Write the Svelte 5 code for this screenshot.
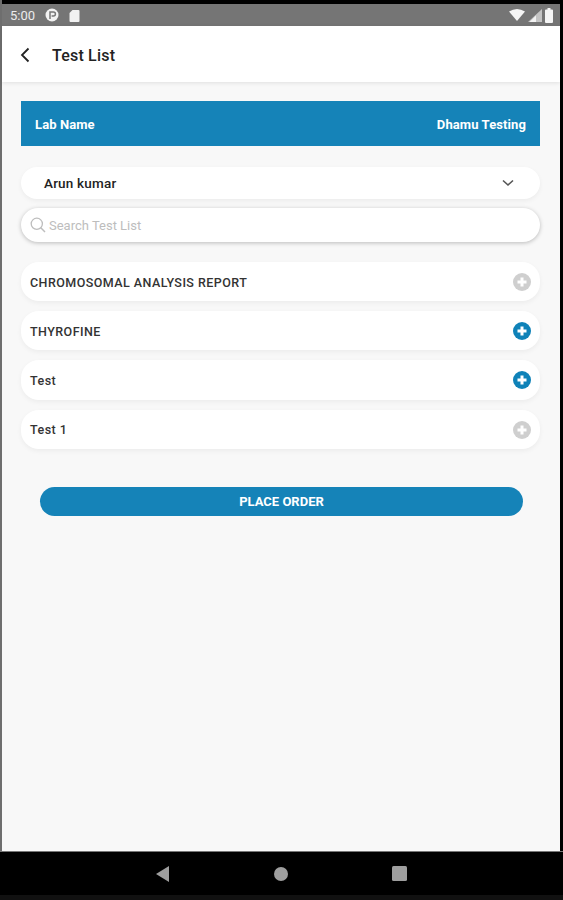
<script>
  let tests = [
    { name: "CHROMOSOMAL ANALYSIS REPORT", active: false },
    { name: "THYROFINE", active: true },
    { name: "Test", active: true },
    { name: "Test 1", active: false },
  ];
</script>

<div class="device">
  <div class="status">
    <div class="status-left">
      <span class="time">5:00</span>
      <svg width="14" height="14" viewBox="0 0 14 14"><circle cx="7" cy="7" r="6.5" fill="#f2f2f2" /><path d="M5 11V4h3.4a2 2 0 0 1 0 4H6.6" fill="none" stroke="#777" stroke-width="1.5" /></svg>
      <svg width="11" height="13" viewBox="0 0 11 13"><path d="M3.5 1H9.5a1 1 0 0 1 1 1v10a1 1 0 0 1-1 1H1.500a1 1 0 0 1-1-1V4z" fill="#f2f2f2" /></svg>
    </div>
    <div class="status-right">
      <svg width="16" height="12" viewBox="0 0 16 12"><path d="M0 2.500Q8-2.500 16 2.500L8 12z" fill="#f5f5f5" /></svg>
      <svg width="14" height="13" viewBox="0 0 14 13"><path d="M14 0V13H0z" fill="#c4c4c4" /><path d="M8 6.500V13H1.500z" fill="#f2f2f2" /></svg>
      <svg width="8" height="15" viewBox="0 0 8 15"><path d="M2.500 0h3v1.500H7a1 1 0 0 1 1 1V14a1 1 0 0 1-1 1H1a1 1 0 0 1-1-1V2.500a1 1 0 0 1 1-1h1.500z" fill="#f5f5f5" /></svg>
    </div>
  </div>

  <header>
    <svg class="back" width="10" height="16" viewBox="0 0 10 16"><path d="M8.500 1.500 2 8l6.500 6.500" fill="none" stroke="#222" stroke-width="1.800" /></svg>
    <h1>Test List</h1>
  </header>

  <main>
    <div class="lab">
      <span>Lab Name</span>
      <span>Dhamu Testing</span>
    </div>

    <div class="select">
      <span>Arun kumar</span>
      <svg width="12" height="8" viewBox="0 0 12 8"><path d="M1 1.500 6 6l5-4.500" fill="none" stroke="#555" stroke-width="1.600" /></svg>
    </div>

    <div class="search">
      <svg width="16" height="16" viewBox="0 0 16 16"><circle cx="6.800" cy="6.800" r="5.600" fill="none" stroke="#bdbdbd" stroke-width="1.300" /><path d="m10.800 10.800 4.200 4.200" stroke="#bdbdbd" stroke-width="1.500" /></svg>
      <span>Search Test List</span>
    </div>

    <ul>
      {#each tests as test}
        <li>
          <span>{test.name}</span>
          <svg width="18" height="18" viewBox="0 0 18 18">
            <circle cx="9" cy="9" r="9" fill={test.active ? "#0f82b8" : "#cfcfcf"} />
            <path d="M9 4.500v9M4.500 9h9" stroke="#fff" stroke-width="3" />
          </svg>
        </li>
      {/each}
    </ul>

    <button>PLACE ORDER</button>
  </main>

  <nav>
    <svg class="tri" width="13" height="16" viewBox="0 0 13 16"><path d="M13 0V16L0 8z" fill="#9e9e9e" /></svg>
    <svg width="14" height="14" viewBox="0 0 14 14"><circle cx="7" cy="7" r="7" fill="#9e9e9e" /></svg>
    <svg width="15" height="15" viewBox="0 0 15 15"><rect width="15" height="15" rx="1.500" fill="#9e9e9e" /></svg>
  </nav>
</div>

<style>
  :global(body) {
    margin: 0;
    background: #000;
  }

  .device {
    width: 563px;
    height: 900px;
    box-sizing: border-box;
    padding: 4px 3px 0 2px;
    background: linear-gradient(90deg, #6e6e6e 2px, #000 2px);
    display: flex;
    flex-direction: column;
    font-family: Roboto, sans-serif;
    overflow: hidden;
  }

  .status {
    height: 22px;
    flex: none;
    background: #757575;
    display: flex;
    align-items: center;
    justify-content: space-between;
    padding: 0 8px;
    color: #ececec;
  }

  .status-left,
  .status-right {
    display: flex;
    align-items: center;
  }

  .status-left {
    gap: 10px;
  }

  .status-right {
    gap: 3px;
    margin-right: -1px;
  }

  .time {
    font-size: 13px;
  }

  header {
    height: 56px;
    flex: none;
    box-sizing: border-box;
    padding: 2px 0 0 18px;
    background: #fff;
    display: flex;
    align-items: center;
    gap: 22px;
    box-shadow: 0 1px 4px rgba(0, 0, 0, 0.1);
    position: relative;
  }

  h1 {
    margin: 0;
    font-size: 16px;
    font-weight: 500;
    color: #222;
    letter-spacing: 0.2px;
  }

  main {
    flex: 1;
    background: #f8f8f8;
    padding: 19px 20px 0 19px;
    display: flex;
    flex-direction: column;
  }

  .lab {
    height: 45px;
    box-sizing: border-box;
    padding: 2px 14px 0;
    background: #1583b8;
    color: #fff;
    font-size: 13px;
    font-weight: 700;
    letter-spacing: 0.1px;
    display: flex;
    align-items: center;
    justify-content: space-between;
  }

  .select {
    height: 32px;
    margin-top: 21px;
    background: #fff;
    border-radius: 16px;
    box-shadow: 0 2px 5px rgba(0, 0, 0, 0.05);
    display: flex;
    align-items: center;
    justify-content: space-between;
    padding: 0 26px 0 23px;
    font-size: 13.5px;
    font-weight: 500;
    letter-spacing: 0.2px;
    color: #222;
  }

  .search {
    height: 34px;
    margin-top: 9px;
    background: #fff;
    border-radius: 17px;
    box-shadow: 0 1px 4px rgba(0, 0, 0, 0.25);
    display: flex;
    align-items: center;
    gap: 3px;
    padding-left: 9px;
    font-size: 13px;
    color: #bdbdbd;
  }

  ul {
    list-style: none;
    margin: 20px 0 0;
    padding: 0;
    display: flex;
    flex-direction: column;
    gap: 10px;
  }

  li {
    height: 39.2px;
    box-sizing: border-box;
    background: #fff;
    border-radius: 18px;
    box-shadow: 0 2px 5px rgba(0, 0, 0, 0.05);
    display: flex;
    align-items: center;
    justify-content: space-between;
    padding: 1px 9px 0;
    font-size: 12.5px;
    font-weight: 500;
    color: #333;
    letter-spacing: 0.45px;
  }

  button {
    align-self: flex-start;
    width: 483px;
    height: 29px;
    margin: 38.2px 0 0 19px;
    border: none;
    border-radius: 15px;
    background: #1583b8;
    color: #fff;
    font-family: inherit;
    font-size: 13px;
    font-weight: 700;
  }

  nav {
    height: 49px;
    flex: none;
    margin: 0 -3px 0 -2px;
    padding-right: 1px;
    background: #000;
    border-top: 1px solid #777;
    border-bottom: 5px solid #111;
    box-sizing: border-box;
    display: flex;
    align-items: center;
    justify-content: center;
    gap: 104px;
  }

  .tri {
    margin-right: 1px;
  }
</style>
